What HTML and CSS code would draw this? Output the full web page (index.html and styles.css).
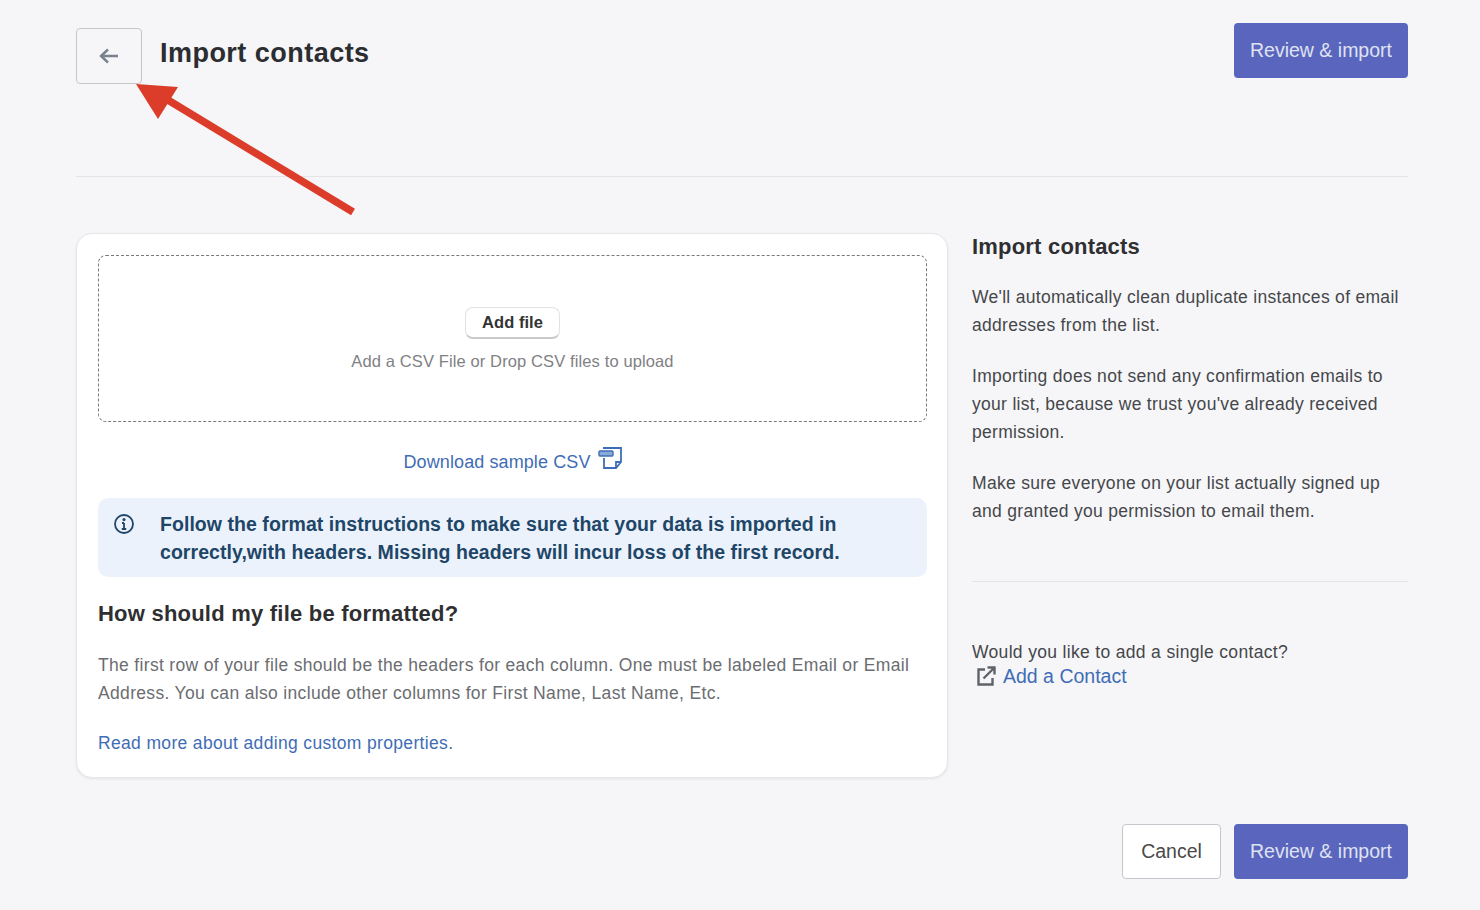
FILE: index.html
```html
<!DOCTYPE html>
<html lang="en">
<head>
    <meta charset="UTF-8">
    <meta name="viewport" content="width=device-width, initial-scale=1.0">
    <title>Import contacts</title>
    <link rel="stylesheet" href="styles.css">
</head>
<body>

<div class="page">
    <header class="page-header">
        <div class="title-group">
            <button class="back-button" type="button" aria-label="Back">
                <svg width="22" height="18" viewBox="0 0 22 18" fill="none" stroke="#78818c" stroke-width="2.4">
                    <path d="M20 9H3M10 2.5 3 9l7 6.5"/>
                </svg>
            </button>
            <h1>Import contacts</h1>
        </div>
        <button class="primary-button" type="button">Review &amp; import</button>
    </header>

    <main class="columns">
        <section class="card">
            <div class="dropzone">
                <button class="add-file" type="button">Add file</button>
                <p>Add a CSV File or Drop CSV files to upload</p>
            </div>

            <div class="download-row">
                <a href="#">Download sample CSV</a>
                <svg class="csv-icon" width="24" height="22" viewBox="0 0 24 22" fill="none" stroke="#3f6db5" stroke-width="1.8">
                    <path d="M5 1h18v14l-5 6H6v-10"/>
                    <path d="M18 21v-6h5"/>
                    <rect x="1" y="4" width="14" height="5" rx="1" fill="#8aabd9" stroke="#3f6db5" stroke-width="1.4"/>
                </svg>
            </div>

            <div class="notice">
                <svg class="notice-icon" width="22" height="22" viewBox="0 0 22 22" fill="none" stroke="#1e4668" stroke-width="1.8">
                    <circle cx="11" cy="11" r="9"/>
                    <path d="M11 10v6M8.8 16h4.4M9 10h2"/>
                    <circle cx="11" cy="6.6" r="0.7" fill="#1e4668"/>
                </svg>
                <p>Follow the format instructions to make sure that your data is imported in correctly,with headers. Missing headers will incur loss of the first record.</p>
            </div>

            <h2>How should my file be formatted?</h2>
            <p class="format-text">The first row of your file should be the headers for each column. One must be labeled Email or Email Address. You can also include other columns for First Name, Last Name, Etc.</p>
            <a class="read-more" href="#">Read more about adding custom properties.</a>
        </section>

        <aside class="sidebar">
            <h3>Import contacts</h3>
            <p>We'll automatically clean duplicate instances of email addresses from the list.</p>
            <p>Importing does not send any confirmation emails to your list, because we trust you've already received permission.</p>
            <p>Make sure everyone on your list actually signed up and granted you permission to email them.</p>
            <hr>
            <div class="single-contact">
                <span>Would you like to add a single contact?</span>
                <div class="contact-link">
                    <svg width="22" height="22" viewBox="0 0 22 22" fill="none" stroke="#5f6368" stroke-width="2.4">
                        <path d="M10 4.5H3.5v15h14V13"/>
                        <path d="M8.5 13.5 19 3M12.5 2.5H19.5V9.5"/>
                    </svg>
                    <a href="#">Add a Contact</a>
                </div>
            </div>
        </aside>
    </main>

    <footer class="page-footer">
        <button class="cancel-button" type="button">Cancel</button>
        <button class="primary-button" type="button">Review &amp; import</button>
    </footer>
</div>

<!-- red annotation drawn over the screenshot -->
<svg class="annotation" width="240" height="150" viewBox="0 0 240 150">
    <path d="M218 128 28 13" stroke="#dc3d2a" stroke-width="7.5" fill="none"/>
    <polygon points="1,0 43,3 23,35" fill="#dc3d2a"/>
</svg>

</body>
</html>
```

FILE: styles.css
```css
* {
    box-sizing: border-box;
}
body {
    font-family: "Liberation Sans", Arial, sans-serif;
    margin: 0;
    height: 910px;
    overflow: hidden;
    background: #f6f6f9;
    color: #3a3a3a;
    position: relative;
}
.page {
    padding: 23px 72px 0 76px;
}
.page-header {
    display: flex;
    justify-content: space-between;
    align-items: flex-start;
    height: 154px;
    border-bottom: 1px solid #e3e4e8;
}
.title-group {
    display: flex;
    align-items: flex-start;
    gap: 18px;
    padding-top: 5px;
}
.title-group h1 {
    margin: 0;
    font-size: 27px;
    line-height: 50px;
    letter-spacing: 0.47px;
    font-weight: bold;
    color: #2b2d30;
}
.back-button {
    width: 66px;
    height: 56px;
    padding: 0;
    display: flex;
    align-items: center;
    justify-content: center;
    background: #f6f6f9;
    border: 1px solid #c4c6cb;
    border-radius: 4px;
}
.primary-button {
    width: 174px;
    height: 55px;
    padding: 0;
    background: #5a66bd;
    border: none;
    border-radius: 4px;
    color: #dfe2f2;
    font-family: inherit;
    font-size: 19.5px;
}
.columns {
    display: flex;
    align-items: flex-start;
    gap: 24px;
    margin-top: 56px;
}
.card {
    width: 872px;
    height: 545px;
    flex-shrink: 0;
    padding: 21px 20px 0 21px;
    background: #fff;
    border: 1px solid #e6e7ea;
    border-radius: 16px;
    box-shadow: 0 1px 3px rgba(0, 0, 0, 0.08);
}
.dropzone {
    height: 167px;
    display: flex;
    flex-direction: column;
    align-items: center;
    padding-top: 51px;
    border: 1px dashed #77797d;
    border-radius: 8px;
}
.dropzone p {
    margin: 11px 0 0;
    font-size: 16.5px;
    line-height: 22px;
    letter-spacing: 0.12px;
    color: #808184;
}
.add-file {
    width: 95px;
    height: 32px;
    padding: 0;
    background: #fff;
    border: 1px solid #e2e2e4;
    border-bottom: 2px solid #c9c9cc;
    border-radius: 8px;
    color: #333;
    font-family: inherit;
    font-size: 16.5px;
    letter-spacing: 0.05px;
    font-weight: bold;
}
.download-row {
    display: flex;
    justify-content: center;
    align-items: center;
    gap: 7px;
    height: 76px;
    padding-top: 5px;
}
.download-row a, .read-more, .contact-link a {
    color: #3f6db5;
    text-decoration: none;
}
.download-row a {
    font-size: 18px;
    letter-spacing: 0.1px;
}
.csv-icon {
    margin-top: -9px;
}
.notice {
    display: flex;
    height: 79px;
    padding: 12px 20px 0 15px;
    gap: 25px;
    background: #ecf2fb;
    border-radius: 10px;
}
.notice-icon {
    flex-shrink: 0;
    margin-top: 3px;
}
.notice p {
    margin: 0;
    font-size: 19.5px;
    line-height: 28px;
    letter-spacing: 0.05px;
    font-weight: bold;
    color: #1e4668;
}
.card h2 {
    margin: 22px 0 0;
    font-size: 22px;
    line-height: 30px;
    letter-spacing: 0.22px;
    font-weight: bold;
    color: #2f2f31;
}
.format-text {
    margin: 22px 0 0;
    font-size: 17.5px;
    line-height: 28px;
    letter-spacing: 0.33px;
    color: #6b6d70;
}
.read-more {
    display: block;
    margin-top: 22px;
    font-size: 17.5px;
    line-height: 28px;
    letter-spacing: 0.34px;
}
.sidebar {
    flex: 1;
}
.sidebar h3 {
    margin: 0;
    font-size: 22px;
    line-height: 28px;
    letter-spacing: 0.2px;
    font-weight: bold;
    color: #2f2f31;
}
.sidebar p {
    margin: 23px 0 0;
    font-size: 17.5px;
    line-height: 28px;
    letter-spacing: 0.3px;
    color: #45474a;
}
.sidebar h3 + p {
    margin-top: 22px;
}
.sidebar hr {
    margin: 56px 0 0;
    border: none;
    border-top: 1px solid #e3e4e8;
}
.single-contact {
    margin-top: 58px;
    font-size: 17.5px;
    line-height: 24px;
    letter-spacing: 0.33px;
    color: #45474a;
}
.contact-link {
    display: flex;
    align-items: center;
    gap: 6px;
    padding-left: 3px;
    letter-spacing: 0;
}
.contact-link a {
    font-size: 19.5px;
}
.page-footer {
    display: flex;
    justify-content: flex-end;
    gap: 13px;
    margin-top: 46px;
}
.cancel-button {
    width: 99px;
    height: 55px;
    padding: 0;
    background: #fff;
    border: 1px solid #c4c6cb;
    border-radius: 4px;
    color: #4a4a4a;
    font-family: inherit;
    font-size: 19.5px;
}
.annotation {
    position: absolute;
    left: 135px;
    top: 84px;
}
```
